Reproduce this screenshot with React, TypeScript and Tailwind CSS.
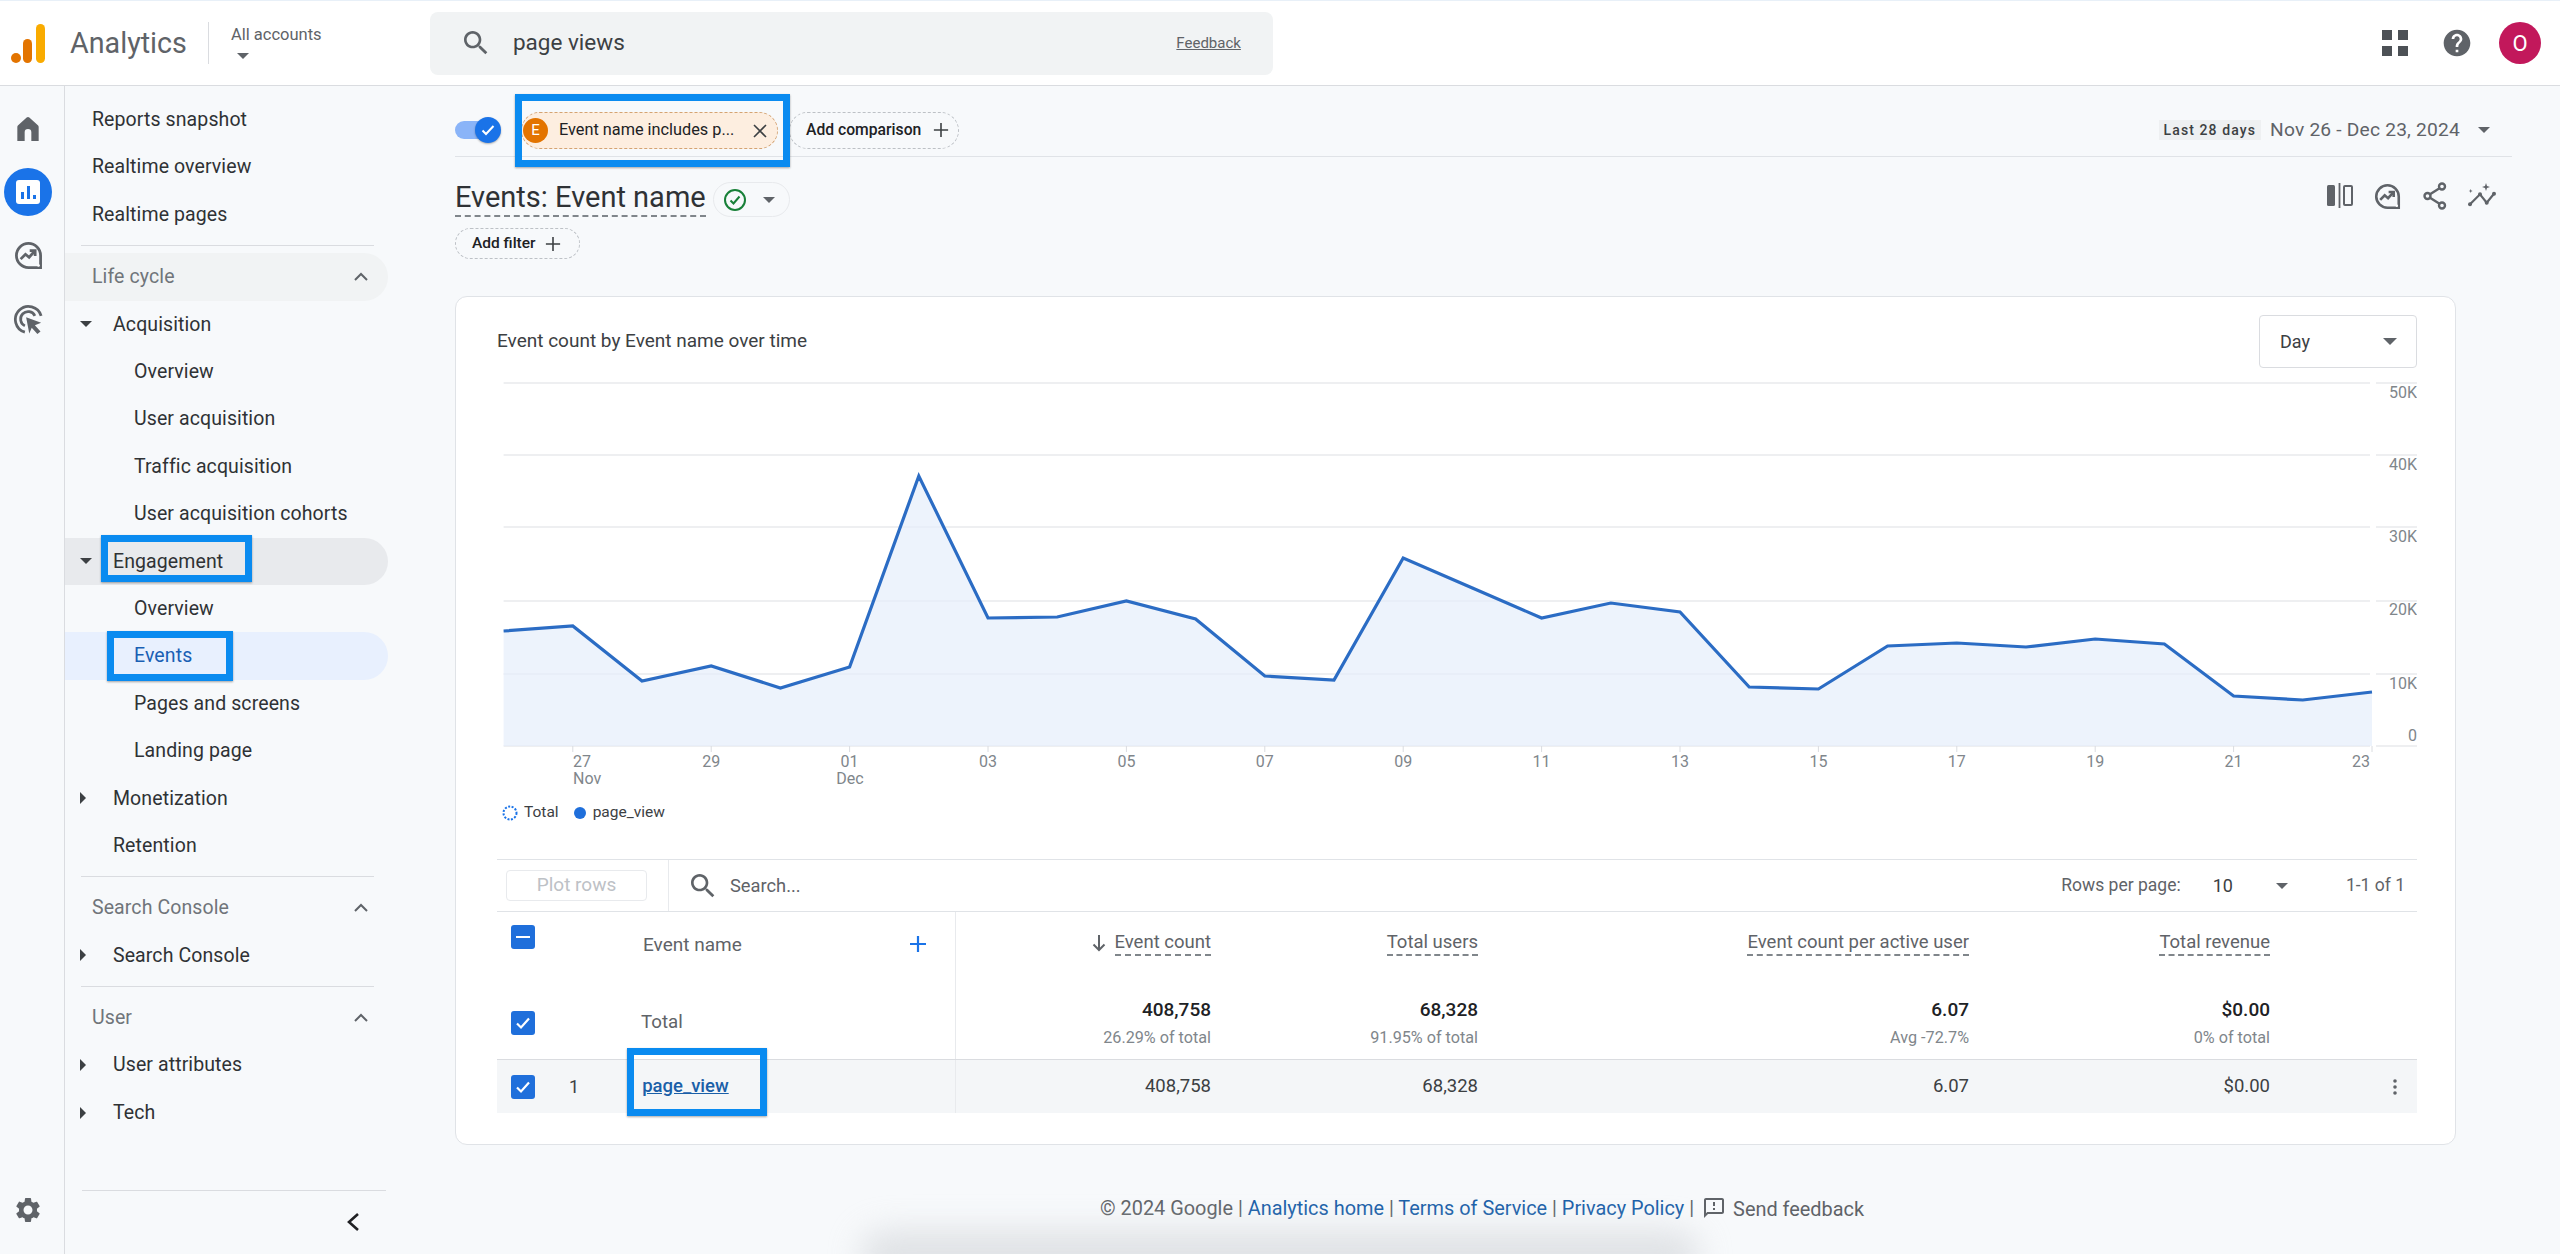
import React from "react";

const HL = "absolute border-[7px] border-[#0a8bf0] shadow-[0_1px_2px_rgba(0,0,0,0.35)] pointer-events-none";

function Caret({ className = "" }: { className?: string }) {
  return <span className={`inline-block w-0 h-0 border-l-[6px] border-r-[6px] border-t-[6px] border-l-transparent border-r-transparent border-t-[#5f6368] ${className}`} />;
}
function CaretRight() {
  return <span className="inline-block w-0 h-0 border-t-[6px] border-b-[6px] border-l-[6px] border-t-transparent border-b-transparent border-l-[#3c4043]" />;
}
function ChevUp() {
  return (
    <svg width="16" height="10" viewBox="0 0 16 10" fill="none" stroke="#5f6368" strokeWidth="2"><path d="M2 8l6-6 6 6" /></svg>
  );
}
function Plus({ size = 18, color = "#3c4043", w = 1.8 }: { size?: number; color?: string; w?: number }) {
  return (
    <svg width={size} height={size} viewBox="0 0 18 18" fill="none" stroke={color} strokeWidth={w}><path d="M9 1v16M1 9h16" /></svg>
  );
}
function SearchIcon({ size = 30 }: { size?: number }) {
  return (
    <svg width={size} height={size} viewBox="0 0 24 24" fill="#5f6368"><path d="M15.5 14h-.79l-.28-.27C15.41 12.59 16 11.11 16 9.5 16 5.91 13.09 3 9.5 3S3 5.91 3 9.5 5.91 16 9.5 16c1.61 0 3.09-.59 4.23-1.57l.27.28v.79l5 4.99L20.49 19l-4.99-5zm-6 0C7.01 14 5 11.99 5 9.5S7.01 5 9.5 5 14 7.01 14 9.5 11.99 14 9.5 14z" /></svg>
  );
}
function InsightIcon({ size = 28 }: { size?: number }) {
  return (
    <svg width={size} height={size} viewBox="0 0 24 24" fill="none" stroke="#5f6368" strokeWidth="2.3">
      <path d="M22 22H12A10 10 0 1 1 22 12z" />
      <path d="M5.500 15l4-4 3 2.500L17 8.500" />
      <path d="M13 8H17.500V12.500" />
      <circle cx="20.300" cy="20.300" r="1.100" fill="#fff" stroke="none" />
    </svg>
  );
}
function CheckBox({ checked = true }: { checked?: boolean }) {
  return (
    <span className="w-[24px] h-[24px] rounded-[3px] bg-[#1f6fdb] flex items-center justify-center shrink-0">
      {checked ? (
        <svg width="18" height="18" viewBox="0 0 18 18" fill="none" stroke="#fff" strokeWidth="2.2"><path d="M3 9.5l4 4 8-9" /></svg>
      ) : (
        <span className="w-[14px] h-[2.5px] bg-white" />
      )}
    </span>
  );
}

function Row({ label, level = 2, caret, active, hover }: { label: string; level?: 1 | 2; caret?: "down" | "right"; active?: boolean; hover?: boolean }) {
  return (
    <div className={`relative h-[47.4px] flex items-center rounded-r-[24px] ${active ? "bg-[#e8f0fe]" : hover ? "bg-[#e8eaed]" : ""}`}>
      {caret && (
        <span className="absolute left-[15px] top-1/2 -translate-y-1/2 flex items-center">
          {caret === "down" ? <span className="inline-block w-0 h-0 border-l-[6px] border-r-[6px] border-t-[6px] border-l-transparent border-r-transparent border-t-[#3c4043]" /> : <CaretRight />}
        </span>
      )}
      <span className={`${level === 1 ? "ml-[48px]" : "ml-[69px]"} text-[19.5px] tracking-[0.1px] ${active ? "text-[#1a5fb4]" : "text-[#2f3235]"}`}>{label}</span>
      {label === "Engagement" && <span className={`${HL} left-[36px] top-[-3px] w-[151px] h-[47px]`} />}
      {label === "Events" && <span className={`${HL} left-[42px] top-[-1px] w-[126px] h-[50px]`} />}
    </div>
  );
}
function Section({ label, pill }: { label: string; pill?: boolean }) {
  return (
    <div className={`h-[47.4px] flex items-center justify-between pl-[27px] pr-[19px] rounded-r-[24px] ${pill ? "bg-[#f1f3f4]" : ""}`}>
      <span className="text-[19.5px] tracking-[0.1px] text-[#70757a]">{label}</span>
      <ChevUp />
    </div>
  );
}
function Divider() {
  return <div className="h-px bg-[#dadce0] ml-[16px] w-[293px]" />;
}

function Sidebar() {
  return (
    <aside className="w-[326px] pr-[3px] shrink-0 flex flex-col pt-[10px]">
      <div className="pl-[27px]">
        {["Reports snapshot", "Realtime overview", "Realtime pages"].map((t) => (
          <div key={t} className="h-[47.4px] flex items-center text-[19.5px] tracking-[0.1px] text-[#2f3235]">{t}</div>
        ))}
      </div>
      <div className="mt-[7px] mb-[7px]"><Divider /></div>
      <Section label="Life cycle" pill />
      <Row label="Acquisition" level={1} caret="down" />
      <Row label="Overview" />
      <Row label="User acquisition" />
      <Row label="Traffic acquisition" />
      <Row label="User acquisition cohorts" />
      <Row label="Engagement" level={1} caret="down" hover />
      <Row label="Overview" />
      <Row label="Events" active />
      <Row label="Pages and screens" />
      <Row label="Landing page" />
      <Row label="Monetization" level={1} caret="right" />
      <Row label="Retention" level={1} />
      <div className="mt-[7px] mb-[7px]"><Divider /></div>
      <Section label="Search Console" />
      <Row label="Search Console" level={1} caret="right" />
      <div className="mt-[7px] mb-[7px]"><Divider /></div>
      <Section label="User" />
      <Row label="User attributes" level={1} caret="right" />
      <Row label="Tech" level={1} caret="right" />
      <div className="mt-auto">
        <div className="h-px bg-[#dadce0] ml-[17px] w-[304px]" />
        <div className="h-[63px] flex items-center pl-[280px] pb-[2px]">
          <svg width="16" height="22" viewBox="0 0 16 22" fill="none" stroke="#202124" strokeWidth="2.6"><path d="M13 3L4 11l9 8" /></svg>
        </div>
      </div>
    </aside>
  );
}

function Rail() {
  return (
    <nav className="w-[65px] shrink-0 border-r border-[#dadce0] flex flex-col items-center pt-[11px] pb-[29px] pr-[8px]">
      <div className="h-[63.5px] flex items-center justify-center">
        <svg width="32" height="32" viewBox="0 0 24 24" fill="#5f6368"><path d="M4 21V10.500C4 10 4.200 9.600 4.600 9.200L11 3.400c.6-.5 1.400-.5 2 0l6.400 5.800c.4.4.6.8.6 1.300V21h-5.500v-6.500a2.500 2.500 0 0 0-5 0V21z" /></svg>
      </div>
      <div className="h-[63.5px] flex items-center justify-center">
        <div className="w-[48px] h-[48px] rounded-full bg-[#1a73e8] flex items-center justify-center">
          <div className="w-[24px] h-[24px] rounded-[3px] bg-white flex items-end justify-center gap-[3px] pb-[5px]">
            <span className="w-[3px] h-[7px] bg-[#1a73e8]" />
            <span className="w-[3px] h-[13px] bg-[#1a73e8]" />
            <span className="w-[3px] h-[4px] bg-[#1a73e8]" />
          </div>
        </div>
      </div>
      <div className="h-[63.5px] flex items-center justify-center"><InsightIcon size={29} /></div>
      <div className="h-[63.5px] flex items-center justify-center">
        <svg width="30" height="30" viewBox="0 0 24 24" fill="none" stroke="#5f6368" strokeWidth="2.200">
          <path d="M9.500 22.500A10.500 10.500 0 1 1 22.500 9.500" />
          <path d="M9.500 17.500A6 6 0 1 1 17.500 9.500" />
          <path d="M10.500 10.500l12 4.500-5 2 4.500 5-2.500 2-4.500-5-2 4.500z" fill="#5f6368" stroke="none" />
        </svg>
      </div>
      <div className="mt-auto">
        <svg width="30" height="30" viewBox="0 0 24 24" fill="#5f6368"><path d="M19.14 12.94c.04-.3.06-.61.06-.94 0-.32-.02-.64-.07-.94l2.03-1.58c.18-.14.23-.41.12-.61l-1.92-3.32c-.12-.22-.37-.29-.59-.22l-2.39.96c-.5-.38-1.03-.7-1.62-.94l-.36-2.54c-.04-.24-.24-.41-.48-.41h-3.84c-.24 0-.43.17-.47.41l-.36 2.54c-.59.24-1.13.57-1.62.94l-2.39-.96c-.22-.08-.47 0-.59.22L2.74 8.87c-.12.21-.08.47.12.61l2.03 1.58c-.05.3-.09.63-.09.94s.02.64.07.94l-2.03 1.58c-.18.14-.23.41-.12.61l1.92 3.32c.12.22.37.29.59.22l2.39-.96c.5.38 1.03.7 1.62.94l.36 2.54c.05.24.24.41.48.41h3.84c.24 0 .44-.17.47-.41l.36-2.54c.59-.24 1.13-.56 1.62-.94l2.39.96c.22.08.47 0 .59-.22l1.92-3.32c.12-.22.07-.47-.12-.61l-2.01-1.58zM12 15.6c-1.98 0-3.6-1.62-3.6-3.6s1.62-3.6 3.6-3.6 3.6 1.62 3.6 3.6-1.62 3.6-3.6 3.6z" /></svg>
      </div>
    </nav>
  );
}

function Header() {
  return (
    <header className="h-[86px] shrink-0 bg-white border-b border-[#dadce0] border-t border-t-[#e8f0f8] flex items-center">
      <svg width="36" height="40" viewBox="0 0 36 40" className="ml-[10px] shrink-0">
        <circle cx="6" cy="35" r="5" fill="#e37400" />
        <rect x="13" y="16" width="9" height="24" rx="4.500" fill="#e37400" />
        <rect x="26" y="1" width="9" height="39" rx="4.500" fill="#f9ab00" />
      </svg>
      <span className="ml-[24px] text-[28.7px] text-[#5f6368] leading-none">Analytics</span>
      <span className="ml-[21px] w-px h-[42px] bg-[#dadce0]" />
      <div className="ml-[22px] w-[199px] flex flex-col items-start pb-[3px]">
        <span className="text-[16.5px] text-[#5f6368] leading-[20px]">All accounts</span>
        <Caret className="ml-[6px] mt-[8px]" />
      </div>
      <div className="w-[843px] h-[63px] rounded-[8px] bg-[#f1f3f4] flex items-center">
        <span className="ml-[30px]"><SearchIcon size={32} /></span>
        <span className="ml-[21px] text-[22.5px] text-[#3c4043]">page views</span>
        <span className="ml-auto mr-[32px] text-[15px] text-[#5f6368] underline">Feedback</span>
      </div>
      <div className="ml-auto flex items-center">
        <span className="grid grid-cols-2 gap-[6px] w-[25px]">
          <i className="w-[10px] h-[10px] bg-[#4d5156]" />
          <i className="w-[10px] h-[10px] bg-[#4d5156]" />
          <i className="w-[10px] h-[10px] bg-[#4d5156]" />
          <i className="w-[10px] h-[10px] bg-[#4d5156]" />
        </span>
        <svg width="32" height="32" viewBox="0 0 24 24" fill="#5f6368" className="ml-[34px]"><path d="M12 2C6.48 2 2 6.48 2 12s4.48 10 10 10 10-4.48 10-10S17.52 2 12 2zm1 17h-2v-2h2v2zm2.07-7.75l-.9.92C13.45 12.9 13 13.5 13 15h-2v-.5c0-1.1.45-2.1 1.17-2.83l1.24-1.26c.37-.36.59-.86.59-1.41 0-1.1-.9-2-2-2s-2 .9-2 2H8c0-2.21 1.79-4 4-4s4 1.79 4 4c0 .88-.36 1.68-.93 2.25z" /></svg>
        <span className="ml-[26px] mr-[19px] w-[42px] h-[42px] rounded-full bg-[#c2185b] text-white text-[22px] flex items-center justify-center">O</span>
      </div>
    </header>
  );
}

const YS = [631, 626, 681, 666, 688, 667, 476, 618, 617, 601, 619, 676, 680, 558, 588, 618, 603, 612, 687, 689, 646, 643, 647, 639, 644, 696, 700, 692];
const X = (i: number) => 503.6 + 69.2 * i;

function Chart() {
  const pts = YS.map((y, i) => `${X(i).toFixed(1)},${y}`).join(" ");
  const grid = [383, 455, 527, 601, 674, 746];
  const yLabels: [string, number][] = [["50K", 393], ["40K", 465], ["30K", 537], ["20K", 610], ["10K", 684], ["0", 736]];
  const xLabels = ["27", "29", "01", "03", "05", "07", "09", "11", "13", "15", "17", "19", "21", "23"];
  return (
    <svg viewBox="497 375 1920 420" className="w-[1920px] h-[420px] block" fontFamily="Roboto, sans-serif" fontSize="16" fill="#80868b">
      {grid.map((y) => (
        <g key={y}>
          <line x1="503.6" x2="2370" y1={y} y2={y} stroke="#e8eaed" strokeWidth="1.6" />
          <line x1="2376" x2="2417" y1={y} y2={y} stroke="#e8eaed" strokeWidth="1.6" />
        </g>
      ))}
      <polygon points={`503.6,746 ${pts} 2372,746`} fill="#e6eefb" fillOpacity="0.7" />
      <polyline points={pts} fill="none" stroke="#2b6cc4" strokeWidth="3.2" strokeLinejoin="miter" />
      {xLabels.map((l, k) => {
        const x = X(1 + k * 2);
        return (
          <g key={l}>
            <line x1={x} x2={x} y1="746" y2="752" stroke="#dadce0" />
            <text x={k === 13 ? 2370 : k === 0 ? 573 : x} y="767" textAnchor={k === 13 ? "end" : k === 0 ? "start" : "middle"}>{l}</text>
          </g>
        );
      })}
      <text x="573" y="784">Nov</text>
      <text x="850" y="784" textAnchor="middle">Dec</text>
      {yLabels.map(([t, y]) => (
        <text key={t} x="2417" y={y + 5} textAnchor="end">{t}</text>
      ))}
    </svg>
  );
}

function Dashed({ children, className = "" }: { children: React.ReactNode; className?: string }) {
  return <span className={`border-b-2 border-dashed border-[#80868b] pb-[1px] ${className}`}>{children}</span>;
}
const COLS = "grid grid-cols-[459px_255px_267px_491px_301px_1fr]";

function Table() {
  const heads = ["Event count", "Total users", "Event count per active user", "Total revenue"];
  const totals: [string, string][] = [["408,758", "26.29% of total"], ["68,328", "91.95% of total"], ["6.07", "Avg -72.7%"], ["$0.00", "0% of total"]];
  const vals = ["408,758", "68,328", "6.07", "$0.00"];
  return (
    <div>
      <div className="h-[53px] border-y border-[#e0e3e7] flex items-center">
        <div className="w-[172px] h-full border-r border-[#e8eaed] flex items-center pl-[9px]">
          <span className="w-[141px] h-[31px] border border-[#e8eaed] rounded-[4px] flex items-center justify-center text-[19px] text-[#bdc1c6]">Plot rows</span>
        </div>
        <span className="ml-[18px]"><SearchIcon size={32} /></span>
        <span className="ml-[11px] text-[18.3px] text-[#5f6368]">Search...</span>
        <span className="ml-auto text-[17.5px] text-[#5f6368]">Rows per page:</span>
        <span className="ml-[32px] text-[18px] text-[#3c4043]">10</span>
        <Caret className="ml-[43px]" />
        <span className="ml-[58px] mr-[12px] text-[17.5px] text-[#5f6368]">1-1 of 1</span>
      </div>
      <div className={`${COLS} h-[74px]`}>
        <div className="border-r border-[#e8eaed] relative flex items-center pl-[14px] pb-[22px]">
          <span className="relative top-[-1px]"><CheckBox checked={false} /></span>
          <span className="ml-[108px] mt-[14px] text-[19px] text-[#5f6368]">Event name</span>
          <span className="ml-auto mr-[28px] mt-[12px]"><Plus size={18} color="#1a73e8" w={2.2} /></span>
        </div>
        {heads.map((h, i) => (
          <div key={h} className="flex items-start justify-end pt-[19px] text-[18.5px] text-[#5f6368]">
            {i === 0 && (
              <svg width="14" height="18" viewBox="0 0 14 18" fill="none" stroke="#5f6368" strokeWidth="2" className="mr-[9px] mt-[3px]"><path d="M7 1v15M1.500 10.500L7 16l5.500-5.500" /></svg>
            )}
            <Dashed className="leading-[22px]">{h}</Dashed>
          </div>
        ))}
      </div>
      <div className={`${COLS} h-[74px] border-b border-[#dadce0]`}>
        <div className="border-r border-[#e8eaed] flex items-center pl-[14px]">
          <CheckBox />
          <span className="ml-[106px] text-[18.7px] text-[#5f6368]">Total</span>
        </div>
        {totals.map(([a, b]) => (
          <div key={a} className="flex flex-col items-end pt-[12px]">
            <span className="text-[19px] font-medium leading-[24px] text-[#202124]">{a}</span>
            <span className="text-[16.2px] leading-[20px] mt-[6px] text-[#80868b]">{b}</span>
          </div>
        ))}
      </div>
      <div className={`${COLS} h-[53px] bg-[#f4f6f8]`}>
        <div className="border-r border-[#e8eaed] flex items-center pl-[14px]">
          <CheckBox />
          <span className="ml-[34px] text-[18px] text-[#3c4043]">1</span>
          <span className="relative ml-[63px] text-[18.5px] font-medium text-[#1a5fa8] underline">
            page_view
            <span className="absolute left-[-15px] right-[-38px] top-[-25px] bottom-[-16px] border-[7px] border-[#0a8bf0] shadow-[0_1px_2px_rgba(0,0,0,0.35)]" />
          </span>
        </div>
        {vals.map((v) => (
          <div key={v} className="flex items-center justify-end text-[18.5px] text-[#3c4043]">{v}</div>
        ))}
        <div className="flex items-center justify-end pr-[19px]">
          <svg width="6" height="16" viewBox="0 0 6 16" fill="#5f6368"><circle cx="3" cy="2" r="1.800" /><circle cx="3" cy="8" r="1.800" /><circle cx="3" cy="14" r="1.800" /></svg>
        </div>
      </div>
    </div>
  );
}

function Main() {
  return (
    <main className="flex-1 min-w-0 pl-[64px] pr-[48px] relative">
      <div className="h-[71px] border-b border-[#e0e3e7] flex items-center pt-[18px]">
        <div className="relative w-[46px] h-[26px] shrink-0">
          <span className="absolute left-0 top-[4px] w-[42px] h-[18px] rounded-full bg-[#8ab4f8]" />
          <span className="absolute right-0 top-0 w-[26px] h-[26px] rounded-full bg-[#1a73e8] shadow-[0_1px_2px_rgba(0,0,0,0.3)] flex items-center justify-center">
            <svg width="16" height="16" viewBox="0 0 16 16" fill="none" stroke="#fff" strokeWidth="2"><path d="M2.500 8.500l3.500 3.500 7.500-8" /></svg>
          </span>
        </div>
        <div className="relative ml-[20px] w-[257px] h-[37px] rounded-full bg-[#fdeee0] border border-dashed border-[#d4a373] flex items-center">
          <span className="ml-[1px] w-[25px] h-[25px] rounded-full bg-[#e37400] text-white text-[15px] flex items-center justify-center">E</span>
          <span className="ml-[11px] text-[16.3px] text-[#202124] whitespace-nowrap">Event name includes p...</span>
          <svg width="14" height="14" viewBox="0 0 14 14" fill="none" stroke="#3c4043" strokeWidth="1.600" className="absolute right-[10px] top-[11px]"><path d="M1 1l12 12M13 1L1 13" /></svg>
          <span className={`${HL} left-[-7px] right-[-13px] top-[-19px] bottom-[-19px]`} />
        </div>
        <div className="ml-[11px] w-[170px] h-[37px] rounded-full border border-dashed border-[#bdc1c6] flex items-center pl-[16px] gap-[12px]">
          <span className="text-[15.7px] font-medium text-[#202124] whitespace-nowrap">Add comparison</span>
          <Plus size={16} />
        </div>
        <span className="ml-auto h-[20px] px-[5px] bg-[#eef0f2] text-[14px] font-medium tracking-[1.1px] text-[#3c4043] flex items-center whitespace-nowrap">Last 28 days</span>
        <span className="ml-[9px] text-[19.2px] tracking-[0.2px] text-[#5f6368] whitespace-nowrap">Nov 26 - Dec 23, 2024</span>
        <Caret className="ml-[18px] mr-[22px] border-l-[5px] border-r-[5px] border-t-[5px]" />
      </div>
      <div className="flex items-start mt-[24px]">
        <Dashed className="text-[29px] leading-[33px] text-[#2f3235] whitespace-nowrap">Events: Event name</Dashed>
        <div className="ml-[7px] mt-[1px] w-[77px] h-[35px] rounded-full border border-[#e8eaed] flex items-center pl-[9px]">
          <svg width="24" height="24" viewBox="0 0 24 24" fill="none" stroke="#188038" strokeWidth="2"><circle cx="12" cy="12" r="10" /><path d="M7.500 12.500l3 3 6-7" /></svg>
          <Caret className="ml-[16px] border-l-[5px] border-r-[5px] border-t-[5px]" />
        </div>
        <div className="ml-auto flex items-center gap-[17.5px] pr-[15px]">
          <svg width="30" height="30" viewBox="0 0 30 30" fill="none" stroke="#5f6368" strokeWidth="2">
            <rect x="2" y="4" width="8" height="21" rx="1.500" fill="#5f6368" stroke="none" />
            <path d="M14.500 2v25" strokeWidth="1.800" />
            <rect x="19" y="5" width="8" height="19" rx="1" />
          </svg>
          <span className="w-[30px] flex justify-center"><InsightIcon size={27} /></span>
          <svg width="30" height="30" viewBox="0 0 30 30" fill="none" stroke="#5f6368" strokeWidth="2.400">
            <circle cx="22" cy="5.500" r="3" /><circle cx="7.500" cy="15" r="3" /><circle cx="22" cy="24.500" r="3" />
            <path d="M10 13.300l9.500-6M10 16.700l9.500 6" />
          </svg>
          <svg width="30" height="30" viewBox="0 0 30 30" fill="#5f6368" stroke="none">
            <path d="M3 23.300L13 13.300l6.700 8.400L27 12.700" fill="none" stroke="#5f6368" strokeWidth="2.200" />
            <circle cx="3" cy="23.300" r="2" /><circle cx="13" cy="13.300" r="2" /><circle cx="19.700" cy="21.700" r="2" /><circle cx="27" cy="12.700" r="2" />
            <path d="M19 2l1 3 3 1-3 1-1 3-1-3-3-1 3-1zM3.700 8l.6 1.400 1.400.6-1.400.6-.6 1.400-.6-1.400-1.400-.6 1.400-.6z" />
          </svg>
        </div>
      </div>
      <div className="mt-[11px] w-[125px] h-[31px] rounded-full border border-dashed border-[#bdc1c6] flex items-center pl-[16px] gap-[9px]">
        <span className="text-[15.5px] font-medium text-[#202124]">Add filter</span>
        <Plus size={16} />
      </div>
      <section className="mt-[37px] mr-[56px] bg-white border border-[#e0e3e7] rounded-[12px] pl-[41px] pr-[38px] pt-[18px] pb-[31px]">
        <div className="flex items-center justify-between h-[53px]">
          <span className="text-[19px] text-[#3c4043]">Event count by Event name over time</span>
          <div className="w-[158px] h-[53px] border border-[#dadce0] rounded-[4px] flex items-center justify-between pl-[20px] pr-[19px]">
            <span className="text-[18px] text-[#3c4043]">Day</span>
            <Caret className="border-l-[7px] border-r-[7px] border-t-[7px]" />
          </div>
        </div>
        <div className="mt-[7px]"><Chart /></div>
        <div className="h-[36px] flex items-center text-[15.5px] text-[#3c4043]">
          <svg width="16" height="16" viewBox="0 0 16 16" fill="none" stroke="#1a73e8" strokeWidth="2" strokeDasharray="2 1.5" className="ml-[5px]"><circle cx="8" cy="8" r="6.500" /></svg>
          <span className="ml-[6px]">Total</span>
          <span className="ml-[15px] w-[12px] h-[12px] rounded-full bg-[#1f6fdb]" />
          <span className="ml-[7px]">page_view</span>
        </div>
        <div className="mt-[28px]"><Table /></div>
      </section>
      <footer className="mt-[47px] pl-[645px] flex items-center text-[19.9px] whitespace-nowrap text-[#5f6368]">
        <span>© 2024 Google | <span className="text-[#1a5fa8]">Analytics home</span> | <span className="text-[#1a5fa8]">Terms of Service</span> | <span className="text-[#1a5fa8]">Privacy Policy</span> |</span>
        <svg width="24" height="24" viewBox="0 0 24 24" fill="#5f6368" className="ml-[8px]"><path d="M20 2H4c-1.100 0-2 .9-2 2v18l4-4h14c1.100 0 2-.9 2-2V4c0-1.100-.9-2-2-2zm0 14H5.170L4 17.170V4h16v12zM11 12h2v2h-2zm0-6h2v4h-2z" /></svg>
        <span className="ml-[7px] mt-[3px]">Send feedback</span>
      </footer>
    </main>
  );
}

export default function App() {
  return (
    <div className="relative w-[2560px] h-[1254px] overflow-hidden bg-[#f7f9fb] flex flex-col font-['Roboto',sans-serif]">
      <Header />
      <div className="flex-1 min-h-0 flex">
        <Rail />
        <Sidebar />
        <Main />
      </div>
      <div className="absolute left-[860px] bottom-[-26px] w-[840px] h-[50px] bg-[#d0d3d7] opacity-60 blur-[16px] rounded-full" />
    </div>
  );
}
